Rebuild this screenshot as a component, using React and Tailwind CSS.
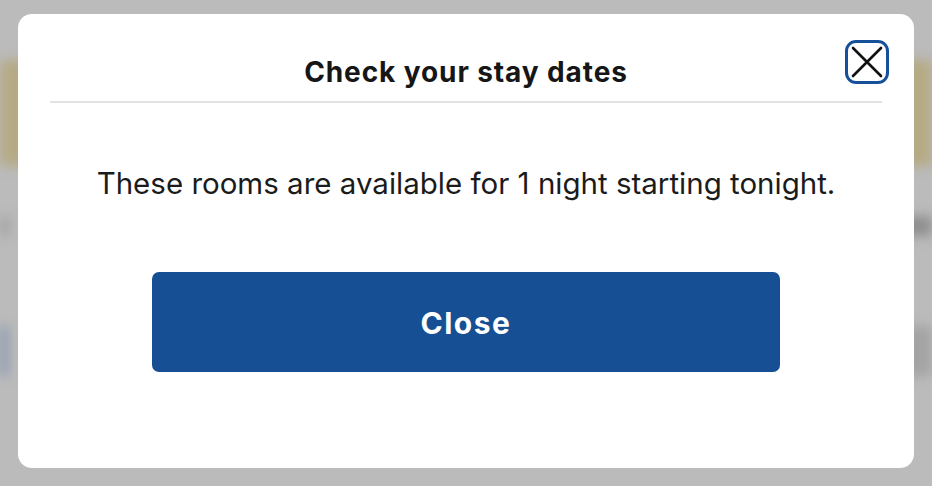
import React from "react";

export default function App() {
  return (
    <div className="relative w-[932px] h-[486px] overflow-hidden bg-[#bbbbbb]" style={{ fontFamily: "Inter, 'Open Sans', sans-serif" }}>
      {/* blurred page behind the overlay */}
      <div className="flex flex-col blur-[6px]">
        <div className="h-[60px]" />
        <div className="h-[106px] bg-[#b5aa84]" />
        <div className="h-[50px]" />
        <div className="flex justify-between h-[20px]">
          <div className="w-[10px] bg-[#a3a3a3]" />
          <div className="w-[30px] bg-[#8e8e8e]" />
        </div>
        <div className="h-[90px]" />
        <div className="flex justify-between h-[50px]">
          <div className="w-[8px] bg-[#8797b0]" />
          <div className="w-[30px] bg-[#a3a3a3]" />
        </div>
      </div>

      {/* modal */}
      <div className="absolute inset-0 flex items-start justify-center pt-[14px]">
        <div className="relative w-[896px] h-[454px] bg-white rounded-[14px] flex flex-col items-center">
          <div className="w-[832px] h-[89px] flex items-end justify-center pb-[15px] border-b-2 border-[#e3e3e3]">
            <h2 className="text-[28px] font-bold text-[#161616] leading-none tracking-[0.9px]">Check your stay dates</h2>
          </div>
          <button className="absolute left-[827px] top-[26px] w-[44px] h-[44px] rounded-[11px] border-[3px] border-[#17509a] flex items-center justify-center">
            <svg width="36" height="36" viewBox="0 0 36 36">
              <path d="M4 4 L32 32 M32 4 L4 32" stroke="#111" strokeWidth="2.6" strokeLinecap="round" />
            </svg>
          </button>
          <p className="mt-[66px] text-[29.5px] leading-none text-[#1b1b1b]">These rooms are available for 1 night starting tonight.</p>
          <button className="mt-[73px] w-[628px] h-[100px] pt-[3px] rounded-[7px] bg-[#174f94] text-white text-[30px] font-bold tracking-[1.5px]">Close</button>
        </div>
      </div>
    </div>
  );
}
